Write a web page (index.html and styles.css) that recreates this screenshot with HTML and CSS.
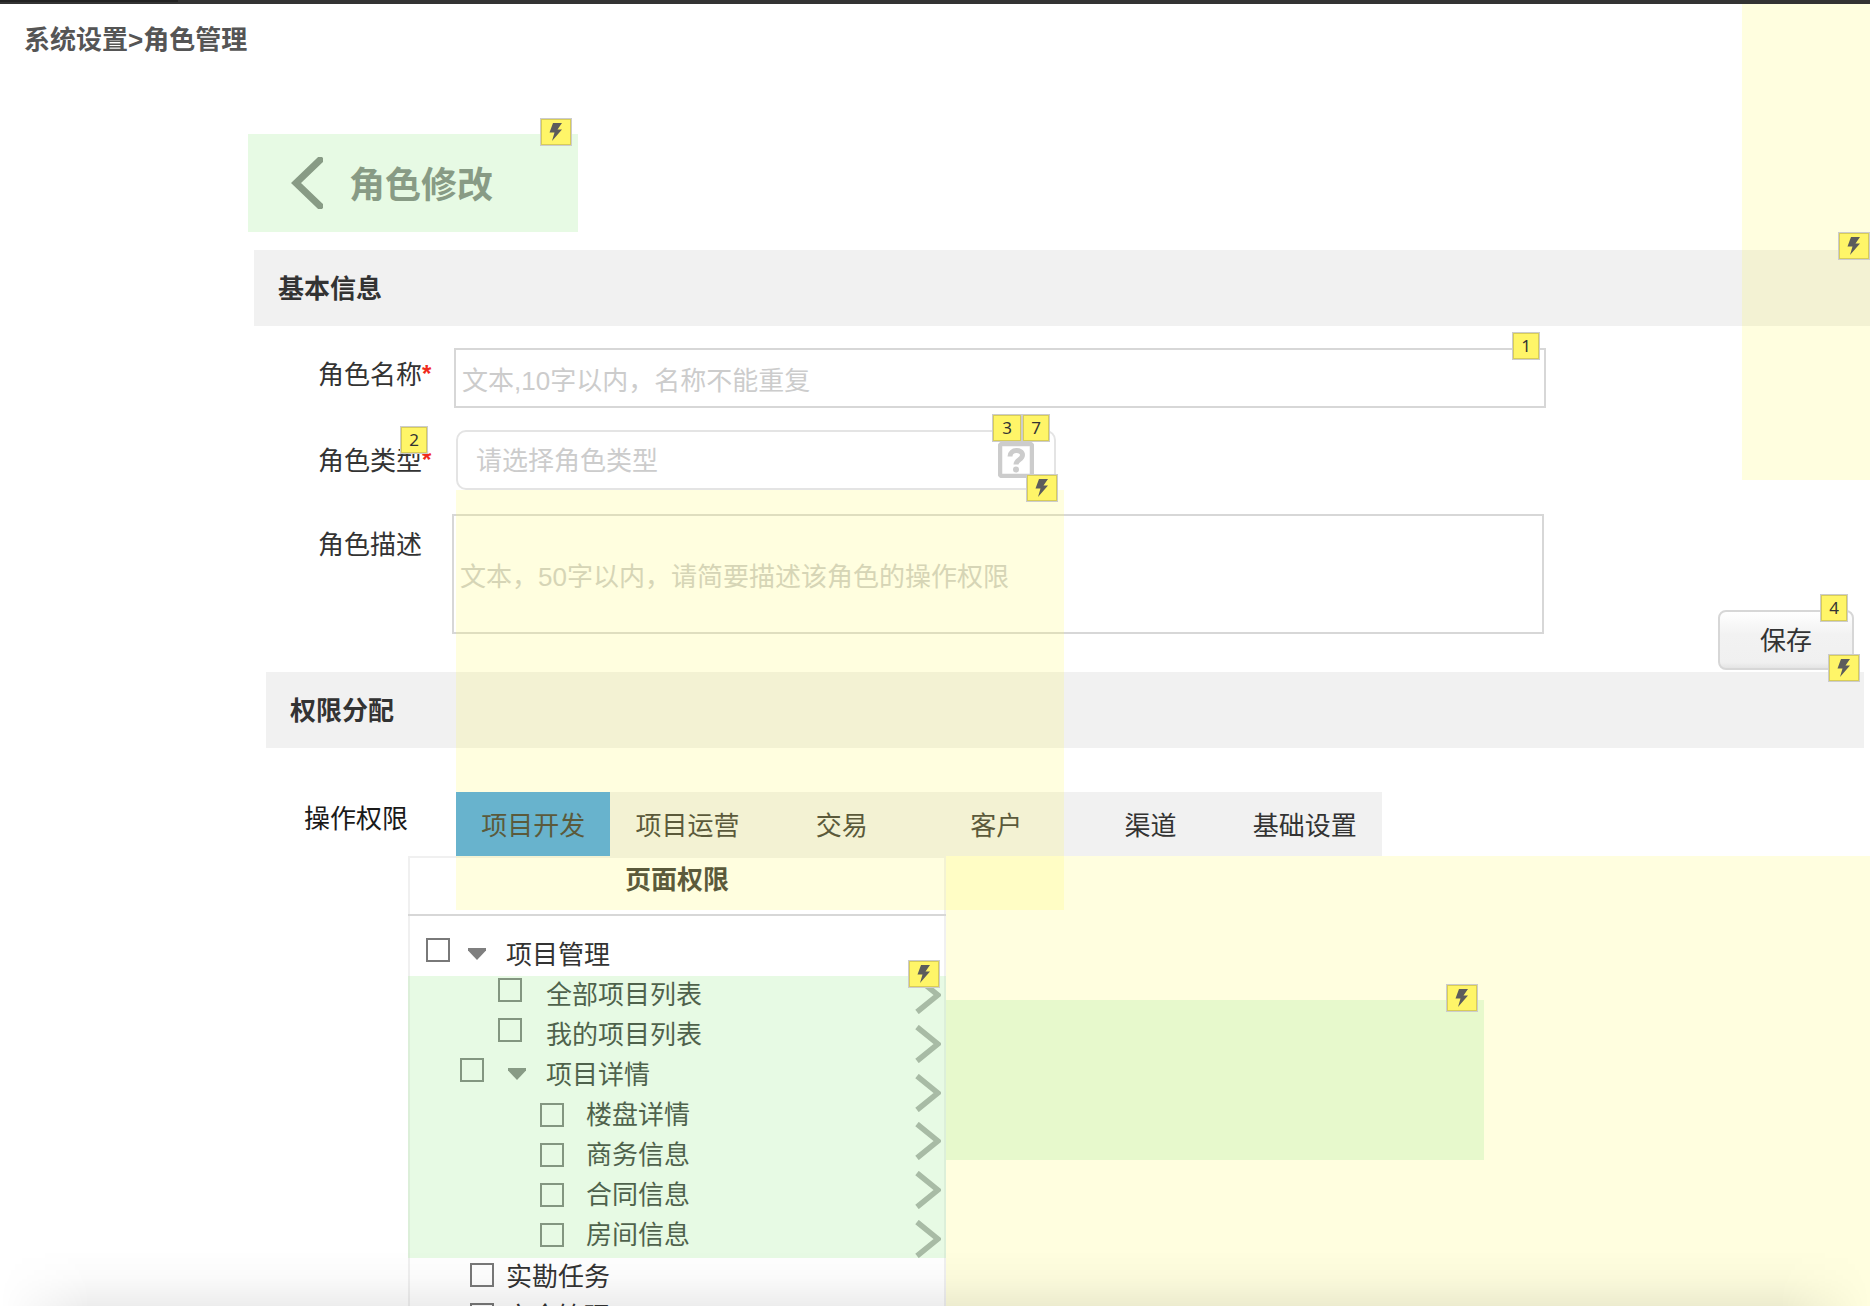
FILE: index.html
```html
<!DOCTYPE html>
<html lang="zh-CN">
<head>
<meta charset="utf-8">
<title>角色管理</title>
<link rel="stylesheet" href="styles.css">
</head>
<body>
<svg class="sprite" aria-hidden="true">
  <symbol id="bolt" viewBox="0 0 14 18"><path d="M4 0h9L8.500 6.500H13L3 18 5.500 9.500H0.500z" fill="currentColor"/></symbol>
  <symbol id="chevron" viewBox="0 0 26 38"><path d="M2 2 23 19 2 36" fill="none" stroke="currentColor" stroke-width="5.500"/></symbol>
</svg>

<header class="topbar"><span class="topbar-active"></span></header>

<p class="breadcrumb">系统设置&gt;角色管理</p>

<main>
  <a class="back zone-green" href="#">
    <svg class="back-icon" viewBox="0 0 32 52"><path d="M29 3 5 26 29 49" fill="none" stroke="currentColor" stroke-width="7" stroke-linecap="round"/></svg>
    <span class="back-text">角色修改</span>
    <span class="note note-back"><svg><use href="#bolt"/></svg></span>
  </a>

  <h2 class="section-title">基本信息</h2>

  <form id="role-form">
    <div class="row row-name">
      <label for="name">角色名称<b class="required">*</b></label>
      <div class="field">
        <input id="name" type="text" placeholder="文本,10字以内，名称不能重复">
        <span class="note note-top">1</span>
      </div>
    </div>
    <div class="row row-type">
      <label for="type">角色类型<b class="required">*</b><span class="note note-label">2</span></label>
      <div class="field">
        <select id="type"><option>请选择角色类型</option></select>
        <svg class="help" viewBox="0 0 36 36"><rect x="2" y="2" width="32" height="32" rx="2" fill="none" stroke="currentColor" stroke-width="4.500"/><path d="M12 14.500c0-8 12.500-7.500 12.500-1.500 0 5-6.500 4.500-6.500 9.500" fill="none" stroke="currentColor" stroke-width="5"/><circle cx="18" cy="27.500" r="3" fill="currentColor"/></svg>
        <span class="note note-three">3</span>
        <span class="note note-seven">7</span>
        <span class="note note-select"><svg><use href="#bolt"/></svg></span>
        <div class="overlay overlay-options"></div>
      </div>
    </div>
    <div class="row row-desc">
      <label for="desc">角色描述</label>
      <textarea id="desc" placeholder="文本，50字以内，请简要描述该角色的操作权限"></textarea>
      <div class="save-wrap">
        <button class="save" type="submit">保存</button>
        <span class="note note-save">4</span>
        <span class="note note-save-action"><svg><use href="#bolt"/></svg></span>
      </div>
    </div>
  </form>

  <h2 class="section-title section-rights">权限分配</h2>

  <div class="tab-row">
    <span class="tab-label" id="tab-label">操作权限</span>
    <nav class="tabs" aria-labelledby="tab-label">
      <button class="tab active" type="button">项目开发</button>
      <button class="tab" type="button">项目运营</button>
      <button class="tab" type="button">交易</button>
      <button class="tab" type="button">客户</button>
      <button class="tab" type="button">渠道</button>
      <button class="tab" type="button">基础设置</button>
    </nav>
  </div>

  <div class="panels">
    <section class="tree">
      <h3>页面权限</h3>
      <div class="tree-body">
        <div class="node level-root"><input id="n0" type="checkbox"><i class="caret"></i><label for="n0">项目管理</label></div>
        <div class="group zone-green">
          <div class="node level-leaf"><input id="n1" type="checkbox"><label for="n1">全部项目列表</label></div>
          <div class="node level-leaf"><input id="n2" type="checkbox"><label for="n2">我的项目列表</label></div>
          <div class="node level-branch"><input id="n3" type="checkbox"><i class="caret"></i><label for="n3">项目详情</label></div>
          <div class="node level-deep"><input id="n4" type="checkbox"><label for="n4">楼盘详情</label></div>
          <div class="node level-deep"><input id="n5" type="checkbox"><label for="n5">商务信息</label></div>
          <div class="node level-deep"><input id="n6" type="checkbox"><label for="n6">合同信息</label></div>
          <div class="node level-deep"><input id="n7" type="checkbox"><label for="n7">房间信息</label></div>
          <div class="arrows">
            <svg><use href="#chevron"/></svg>
            <svg><use href="#chevron"/></svg>
            <svg><use href="#chevron"/></svg>
            <svg><use href="#chevron"/></svg>
            <svg><use href="#chevron"/></svg>
            <svg><use href="#chevron"/></svg>
          </div>
          <span class="note note-group"><svg><use href="#bolt"/></svg></span>
        </div>
        <div class="node level-task"><input id="n8" type="checkbox"><label for="n8">实勘任务</label></div>
        <div class="node level-task"><input id="n9" type="checkbox"><label for="n9">安全管理</label></div>
      </div>
    </section>
    <section class="detail">
      <div class="detail-zone zone-green"><span class="note note-group"><svg><use href="#bolt"/></svg></span></div>
    </section>
  </div>
</main>

<div class="overlay overlay-side"></div>
<span class="note note-side"><svg><use href="#bolt"/></svg></span>
<div class="bottom-shade"></div>
</body>
</html>
```
FILE: styles.css
```css
* { box-sizing: border-box; }

:root {
  --yellow: rgba(255, 250, 94, 0.2);
  --green: rgba(164, 236, 152, 0.26);
  --grey: #f1f1f1;
}

body {
  position: relative;
  height: 100vh;
  margin: 0;
  overflow: hidden;
  background: #fff;
  color: #333;
  font: 26px/36px "Liberation Sans", "Noto Sans CJK SC", sans-serif;
}

button, input, select, textarea { font: inherit; color: inherit; }

.sprite { position: absolute; width: 0; height: 0; }

.topbar { height: 4px; background: #333; }
.topbar-active { display: block; width: 178px; height: 2px; background: #222; }

.breadcrumb {
  margin: 0;
  padding: 18px 24px;
  color: #555;
  font-weight: bold;
}

/* Tinted click areas */
.zone-green { position: relative; }
.zone-green::after {
  content: "";
  position: absolute;
  inset: 0;
  background: var(--green);
  pointer-events: none;
}

.overlay {
  position: absolute;
  z-index: 2;
  background: var(--yellow);
  pointer-events: none;
}
.overlay-options { top: 60px; left: 0; width: 608px; height: 420px; }
.overlay-side { top: 4px; right: 0; width: 128px; height: 476px; }

/* Annotation markers */
.note {
  position: absolute;
  z-index: 3;
  display: flex;
  align-items: center;
  justify-content: center;
  width: 28px;
  height: 28px;
  border: 1px solid #ccc;
  background: #fff568;
  box-shadow: inset 0 0 0 1px #d8cd58;
  color: #333;
  font: 17px/20px "Noto Sans", sans-serif;
}
.note:has(svg) { width: 32px; color: #5c5c5c; }
.note svg { width: 14px; height: 18px; }
.note-back { top: -16px; right: 6px; }
.note-top { top: -16px; right: 6px; }
.note-label { left: 82px; }
.note-three { top: -16px; left: 536px; width: 30px; }
.note-seven { top: -16px; left: 566px; }
.note-select { top: 44px; left: 570px; }
.note-save { top: -16px; right: 6px; }
.note-save-action { top: 44px; right: -6px; }
.note-group { top: -16px; right: 6px; }
.note-side { top: 232px; right: 0; }

.back {
  display: flex;
  align-items: center;
  gap: 26px;
  width: 330px;
  height: 98px;
  margin: 58px 0 18px 248px;
  padding: 0 43px;
  color: #7f7f7f;
  font-size: 36px;
  font-weight: bold;
  text-decoration: none;
}
.back-icon { width: 32px; height: 52px; }
.back-text { padding-top: 6px; }

.section-title {
  margin: 0 0 0 254px;
  padding: 21px 24px 19px;
  background: var(--grey);
  font-size: 26px;
  line-height: 36px;
}
.section-rights { margin: 2px 6px 0 266px; }

/* Form */
.row { display: flex; align-items: flex-start; padding-left: 318px; }
.row label { position: relative; flex: none; }
.required {
  color: #f02a1d;
  font-size: 24px;
  line-height: 20px;
  vertical-align: 2px;
}
.field { position: relative; }

.row-name { margin-top: 22px; padding-right: 324px; }
.row-name label { width: 136px; padding-top: 9px; }
.row-name .field { flex: 1; }
.row-type { margin-top: 22px; }
.row-type label { width: 138px; padding-top: 13px; }
.note-label { top: -4px; }
.row-desc { margin-top: 24px; padding-right: 16px; }
.row-desc label { width: 134px; padding-top: 13px; }

#name, #type, #desc {
  display: block;
  width: 100%;
  margin: 0;
  border: 2px solid #d7d7d7;
  background: #fff;
}
#name { height: 60px; padding: 6px 6px 0; }
#type {
  width: 600px;
  height: 60px;
  padding: 2px 18px 0;
  border-color: #e4e4e4;
  border-radius: 10px;
  appearance: none;
  color: #ccc;
}
#desc { flex: 1; height: 120px; padding: 43px 6px 0; resize: none; }
::placeholder { color: #ccc; opacity: 1; }

.help {
  position: absolute;
  top: 12px;
  left: 542px;
  width: 36px;
  height: 36px;
  color: #ccc;
}

.save-wrap { position: relative; flex: none; margin: 96px 0 0 174px; }
.save {
  display: block;
  width: 136px;
  height: 60px;
  padding: 2px 0 0;
  border: 2px solid #d7d7d7;
  border-radius: 8px;
  background: linear-gradient(#fff, #f2f2f2 40%, #f0f0f0 90%, #e4e4e4);
}

/* Tabs */
.tab-row { display: flex; margin: 44px 0 0 304px; }
.tab-label { width: 152px; padding-top: 9px; color: #1a1a1a; }
.tabs {
  display: grid;
  grid-template-columns: repeat(6, 1fr);
  width: 926px;
  background: var(--grey);
}
.tab { height: 64px; padding: 3px 0 0; border: 0; background: none; }
.tab.active { background: #43a2e9; }

/* Permission tree */
.panels { display: flex; margin-left: 408px; }
.tree {
  flex: none;
  width: 538px;
  border: 2px solid #f0f0f0;
}
.tree h3 {
  margin: 0 -2px;
  padding: 4px 0 16px;
  border-bottom: 2px solid #d7d7d7;
  font-size: 26px;
  line-height: 36px;
  text-align: center;
}
.tree-body { margin: 0 -2px; padding-top: 20px; }
.node { display: flex; align-items: flex-start; height: 40px; }
.node label { padding-top: 1px; }
.node input {
  flex: none;
  width: 24px;
  height: 24px;
  margin: 2px 0 0;
  border: 2px solid #797979;
  background: #fff;
  appearance: none;
}
.caret {
  flex: none;
  width: 18px;
  height: 12px;
  margin: 12px 20px 0 18px;
  background: #7f7f7f;
  clip-path: polygon(0 0, 100% 0, 100% 20%, 50% 100%, 0 20%);
}
.level-root { padding-left: 18px; }
.level-leaf { padding-left: 90px; gap: 24px; }
.level-branch { padding-left: 52px; }
.level-branch .caret { margin-left: 24px; }
.level-deep { padding-left: 132px; gap: 22px; }
.level-task { padding-left: 62px; gap: 12px; }
.level-deep input { margin-top: 7px; }
.level-task input { margin-top: 5px; }
.group { padding-bottom: 2px; }

.arrows {
  position: absolute;
  top: 0;
  right: 5px;
  bottom: 0;
  display: flex;
  flex-direction: column;
  justify-content: space-between;
}
.arrows svg { width: 26px; height: 38px; color: #aaa; }

.detail { flex: 1; height: 600px; padding-top: 144px; background: var(--yellow); }
.detail-zone { width: 538px; height: 160px; }

.bottom-shade {
  position: absolute;
  right: 0;
  bottom: 0;
  left: 0;
  z-index: 4;
  height: 56px;
  background: linear-gradient(rgba(0, 0, 0, 0), rgba(0, 0, 0, 0.02) 50%, rgba(0, 0, 0, 0.07));
  mask-image: linear-gradient(90deg, transparent, #000 90px, #000 calc(100% - 90px), transparent);
  pointer-events: none;
}
```
